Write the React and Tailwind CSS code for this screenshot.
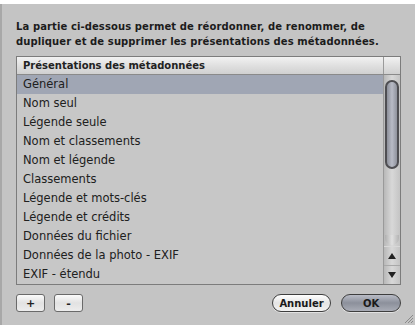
import React from 'react';

const ROWS = [
  'Général',
  'Nom seul',
  'Légende seule',
  'Nom et classements',
  'Nom et légende',
  'Classements',
  'Légende et mots-clés',
  'Légende et crédits',
  'Données du fichier',
  'Données de la photo - EXIF',
  'EXIF - étendu',
];

const font = { fontFamily: '"DejaVu Sans", "Liberation Sans", sans-serif' };

const Scrollbar = () => (
  <div className="w-[17px] shrink-0 border-l border-[#9a9a9a] bg-gradient-to-r from-[#b8b8b8] via-[#d8d8d8] to-[#c4c4c4] flex flex-col">
    <div className="flex-1 px-[1px] pt-[5px] pb-[1px] flex flex-col">
      <div className="h-[89px] rounded-full border-2 border-[#4e4e52] bg-gradient-to-r from-[#8d909a] via-[#b8bbc6] to-[#8f929c]" />
      <div className="flex-1" />
      <div className="h-[10px] rounded-b-full bg-gradient-to-r from-[#b0b0b0] via-[#e0e0e0] to-[#b4b4b4]" />
    </div>
    <div className="h-[19px] flex items-center justify-center border-t border-[#d8d8d8]">
      <svg width="8" height="6" viewBox="0 0 8 6"><path d="M4 0 L8 6 L0 6 Z" fill="#222" /></svg>
    </div>
    <div className="h-[19px] flex items-center justify-center border-t border-[#a8a8a8]">
      <svg width="8" height="6" viewBox="0 0 8 6"><path d="M0 0 L8 0 L4 6 Z" fill="#222" /></svg>
    </div>
  </div>
);

const PillButton = ({ children, dark, className = '' }) => (
  <div
    className={`h-[18px] rounded-full border border-[#3e3e3e] flex items-center justify-center text-[10px] font-bold text-[#1a1a1a] shadow-[0_1px_0_rgba(255,255,255,0.5)] ${
      dark
        ? 'bg-gradient-to-b from-[#b9bcc6] via-[#8c909b] to-[#a9acb6]'
        : 'bg-gradient-to-b from-[#ffffff] via-[#e4e4e4] to-[#f2f2f2]'
    } ${className}`}
  >
    {children}
  </div>
);

const SquareButton = ({ children }) => (
  <div className="w-[29px] h-[18px] rounded-[3px] border border-[#6a6a6a] bg-gradient-to-b from-[#fbfbfb] via-[#e2e2e2] to-[#ededed] flex items-center justify-center text-[11px] font-bold text-[#222] leading-none">
    {children}
  </div>
);

export default function App() {
  return (
    <div className="w-[415px] h-[325px] bg-white overflow-hidden" style={font}>
      <div className="mt-[4px] h-[321px] bg-[#c4c4c4] border-l-2 border-[#a8a8a8] flex flex-col relative">
        <p className="ml-[14px] mt-[15px] text-[10px] tracking-[0.1px] font-bold leading-[15px] text-[#1c1c1c]">
          La partie ci-dessous permet de réordonner, de renommer, de
          <br />
          dupliquer et de supprimer les présentations des métadonnées.
        </p>

        <div className="ml-[14px] mt-[7px] w-[385px] h-[229px] border border-[#7c7c7c] bg-[#c7c7c7] flex flex-col">
          <div className="h-[19px] flex border-b border-[#8a8a8a] bg-gradient-to-b from-[#f2f2f2] via-[#e0e0e0] to-[#d0d0d0]">
            <div className="flex-1 pl-[6px] flex items-center text-[10px] font-bold text-[#222]">
              Présentations des métadonnées
            </div>
            <div className="w-[17px] border-l border-[#9a9a9a]" />
          </div>
          <div className="flex-1 flex">
            <div className="flex-1 flex flex-col">
              {ROWS.map((r, i) => (
                <div
                  key={r}
                  className={`h-[19px] shrink-0 pl-[6px] flex items-center text-[11.5px] text-[#202020] ${
                    i === 0 ? 'bg-[#a0a6b4]' : ''
                  }`}
                >
                  {r}
                </div>
              ))}
            </div>
            <Scrollbar />
          </div>
        </div>

        <div className="ml-[14px] mt-[9px] w-[385px] flex items-center">
          <div className="flex gap-[9px]">
            <SquareButton>+</SquareButton>
            <SquareButton>-</SquareButton>
          </div>
          <div className="flex-1" />
          <PillButton className="w-[59px] mr-[10px]">Annuler</PillButton>
          <PillButton dark className="w-[60px]">OK</PillButton>
        </div>

        <svg className="absolute right-[1px] bottom-[1px]" width="12" height="12" viewBox="0 0 12 12">
          <path d="M11 3 L3 11 M11 6 L6 11 M11 9 L9 11" stroke="#8a8a8a" strokeWidth="1" />
        </svg>
      </div>
    </div>
  );
}
